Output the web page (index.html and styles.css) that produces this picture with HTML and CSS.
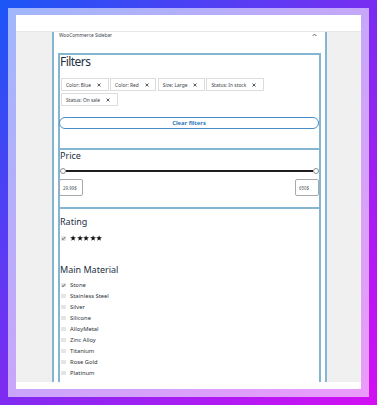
FILE: index.html
```html
<!DOCTYPE html>
<html>
<head>
<meta charset="utf-8">
<link rel="stylesheet" href="styles.css">
</head>
<body>
<div class="bg">
  <div class="frame">
    <div class="window">
      <div class="topbar"></div>
      <div class="canvas">
        <div class="column">
          <div class="sidebar-head">
            <span class="sidebar-title">WooCommerce Sidebar</span>
            <svg class="caret" width="5" height="4" viewBox="0 0 5 4"><path d="M0.6 3 L2.5 1.1 L4.4 3" fill="none" stroke="#555" stroke-width="0.9"/></svg>
          </div>
          <div class="blocks">
            <section class="block filters">
              <h2 class="filters-title">Filters</h2>
              <div class="chips">
                <span class="chip">Color: Blue<svg class="x" viewBox="0 0 4 4"><path d="M0.5 0.5 L3.5 3.5 M3.5 0.5 L0.5 3.5" stroke="#2c3338" stroke-width="0.8"/></svg></span>
                <span class="chip">Color: Red<svg class="x" viewBox="0 0 4 4"><path d="M0.5 0.5 L3.5 3.5 M3.5 0.5 L0.5 3.5" stroke="#2c3338" stroke-width="0.8"/></svg></span>
                <span class="chip">Size: Large<svg class="x" viewBox="0 0 4 4"><path d="M0.5 0.5 L3.5 3.5 M3.5 0.5 L0.5 3.5" stroke="#2c3338" stroke-width="0.8"/></svg></span>
                <span class="chip">Status: In stock<svg class="x" viewBox="0 0 4 4"><path d="M0.5 0.5 L3.5 3.5 M3.5 0.5 L0.5 3.5" stroke="#2c3338" stroke-width="0.8"/></svg></span>
                <span class="chip">Status: On sale<svg class="x" viewBox="0 0 4 4"><path d="M0.5 0.5 L3.5 3.5 M3.5 0.5 L0.5 3.5" stroke="#2c3338" stroke-width="0.8"/></svg></span>
              </div>
              <button class="clear">Clear filters</button>
            </section>
            <section class="block price">
              <h3 class="sec-title">Price</h3>
              <div class="slider">
                <span class="handle"></span>
                <span class="track"></span>
                <span class="handle"></span>
              </div>
              <div class="price-inputs">
                <span class="pinput">29.99$</span>
                <span class="pinput">650$</span>
              </div>
            </section>
            <section class="block rating">
              <h3 class="sec-title">Rating</h3>
              <div class="row">
                <span class="cb checked"><svg viewBox="0 0 5 5"><path d="M1 2.6 L2.1 3.6 L4.1 1.2" fill="none" stroke="#1e1e1e" stroke-width="0.7"/></svg></span>
                <span class="stars">
                  <svg viewBox="0 0 10 10"><path d="M5 0.3 L6.2 3.6 L9.7 3.7 L6.9 5.9 L7.9 9.3 L5 7.3 L2.1 9.3 L3.1 5.9 L0.3 3.7 L3.8 3.6 Z"/></svg>
                  <svg viewBox="0 0 10 10"><path d="M5 0.3 L6.2 3.6 L9.7 3.7 L6.9 5.9 L7.9 9.3 L5 7.3 L2.1 9.3 L3.1 5.9 L0.3 3.7 L3.8 3.6 Z"/></svg>
                  <svg viewBox="0 0 10 10"><path d="M5 0.3 L6.2 3.6 L9.7 3.7 L6.9 5.9 L7.9 9.3 L5 7.3 L2.1 9.3 L3.1 5.9 L0.3 3.7 L3.8 3.6 Z"/></svg>
                  <svg viewBox="0 0 10 10"><path d="M5 0.3 L6.2 3.6 L9.7 3.7 L6.9 5.9 L7.9 9.3 L5 7.3 L2.1 9.3 L3.1 5.9 L0.3 3.7 L3.8 3.6 Z"/></svg>
                  <svg viewBox="0 0 10 10"><path d="M5 0.3 L6.2 3.6 L9.7 3.7 L6.9 5.9 L7.9 9.3 L5 7.3 L2.1 9.3 L3.1 5.9 L0.3 3.7 L3.8 3.6 Z"/></svg>
                </span>
              </div>
            </section>
            <section class="block material">
              <h3 class="sec-title">Main Material</h3>
              <ul class="list">
                <li><span class="cb checked"><svg viewBox="0 0 5 5"><path d="M1 2.6 L2.1 3.6 L4.1 1.2" fill="none" stroke="#1e1e1e" stroke-width="0.7"/></svg></span>Stone</li>
                <li><span class="cb"></span>Stainless Steel</li>
                <li><span class="cb"></span>Silver</li>
                <li><span class="cb"></span>Silicone</li>
                <li><span class="cb"></span>AlloyMetal</li>
                <li><span class="cb"></span>Zinc Alloy</li>
                <li><span class="cb"></span>Titanium</li>
                <li><span class="cb"></span>Rose Gold</li>
                <li><span class="cb"></span>Platinum</li>
                <li><span class="cb"></span>Gold-plated</li>
              </ul>
            </section>
          </div>
        </div>
      </div>
      <div class="bottombar"></div>
    </div>
  </div>
</div>
</body>
</html>
```

FILE: styles.css
```css
* { box-sizing: border-box; }
html, body { margin: 0; padding: 0; }
body {
  width: 377px;
  height: 405px;
  overflow: hidden;
  font-family: "Noto Sans", "Open Sans", sans-serif;
}
.bg {
  width: 377px;
  height: 405px;
  padding: 8px;
  background: linear-gradient(135deg, #1a56f6 0%, #7c2cf1 50%, #d40ef3 100%);
}
.frame {
  width: 361px;
  height: 389px;
  padding: 7px 8px 8px 8px;
  background: rgba(255, 255, 255, 0.58);
}
.window {
  width: 345px;
  height: 374px;
  background: #fff;
  display: flex;
  flex-direction: column;
}
.topbar {
  height: 17px;
  flex: none;
  border-bottom: 1px solid #e8e8e8;
}
.canvas {
  height: 350px;
  flex: none;
  background: #f0f0f0;
  padding-left: 36px;
  overflow: hidden;
}
.bottombar { height: 7px; flex: none; }
.column {
  width: 275px;
  height: 100%;
  background: #fff;
  border-left: 2px solid #84b5d1;
  border-right: 2px solid #84b5d1;
  padding: 0 4px;
  overflow: hidden;
}
.sidebar-head {
  height: 21px;
  display: flex;
  justify-content: space-between;
  align-items: flex-start;
  padding: 0 4px 0 1px;
}
.sidebar-title {
  font-size: 4.8px;
  line-height: 6px;
  color: #3c434a;
}
.caret { margin-top: 1px; }
.blocks {
  border: 2px solid #84b5d1;
  border-bottom: none;
  min-height: 400px;
}
.block { margin: 0; }
.filters {
  padding-bottom: 19px;
  border-bottom: 2px solid #84b5d1;
}
.filters-title {
  margin: 0;
  font-size: 12px;
  line-height: 14px;
  font-weight: 400;
  letter-spacing: -0.55px;
  color: #23303f;
}
.chips {
  margin-top: 9px;
  display: flex;
  flex-wrap: wrap;
  gap: 2px 1.5px;
  padding-left: 1px;
}
.chip {
  height: 13px;
  display: inline-flex;
  align-items: center;
  padding: 0 6.5px 0 4px;
  border: 1px solid #dcdcde;
  font-size: 4.9px;
  color: #3c434a;
  white-space: nowrap;
}
.x {
  width: 4px;
  height: 4px;
  margin-left: 6px;
}
.clear {
  display: block;
  width: calc(100% + 1px);
  margin: 11px 0 0 -1px;
  height: 12px;
  padding: 0;
  border: 1px solid #4a8dc6;
  border-radius: 6px;
  background: #fff;
  font-family: "Noto Sans", sans-serif;
  font-weight: 700;
  font-size: 5.8px;
  color: #2f78bb;
}
.price {
  padding-bottom: 11px;
  border-bottom: 2px solid #84b5d1;
}
.sec-title {
  margin: 0;
  font-size: 9px;
  line-height: 11px;
  font-weight: 400;
  color: #23303f;
}
.slider {
  margin-top: 7px;
  height: 6px;
  display: flex;
  align-items: center;
}
.handle {
  width: 6px;
  height: 6px;
  flex: none;
  border-radius: 50%;
  border: 1px solid #8c8f94;
  background: #fff;
}
.track {
  flex: 1;
  height: 2px;
  background: #1e1e1e;
}
.price-inputs {
  margin: 5px 0 0 -1px;
  display: flex;
  justify-content: space-between;
}
.pinput {
  width: 24px;
  height: 17px;
  border: 1px solid #a7aaad;
  border-radius: 2px;
  font-size: 4.4px;
  color: #50575e;
  display: flex;
  align-items: center;
  padding-left: 3px;
}
.rating .sec-title { margin-top: 7px; }
.row {
  margin-top: 8px;
  height: 7px;
  display: flex;
  align-items: center;
  padding-left: 1px;
}
.cb {
  width: 4.6px;
  height: 4.6px;
  flex: none;
  background: #e4e5e7;
  display: inline-block;
}
.cb svg {
  width: 5px;
  height: 5px;
  display: block;
}
.stars {
  display: flex;
  margin-left: 4.5px;
  gap: 0.3px;
}
.stars svg {
  width: 6.2px;
  height: 6.2px;
  fill: #111;
}
.material .sec-title { margin-top: 21.5px; }
.list {
  list-style: none;
  margin: 5px 0 0 0;
  padding: 0 0 0 1px;
}
.list li {
  height: 11px;
  display: flex;
  align-items: center;
  font-size: 5.8px;
  color: #2c3338;
}
.list .cb { margin-right: 4.5px; }
```
